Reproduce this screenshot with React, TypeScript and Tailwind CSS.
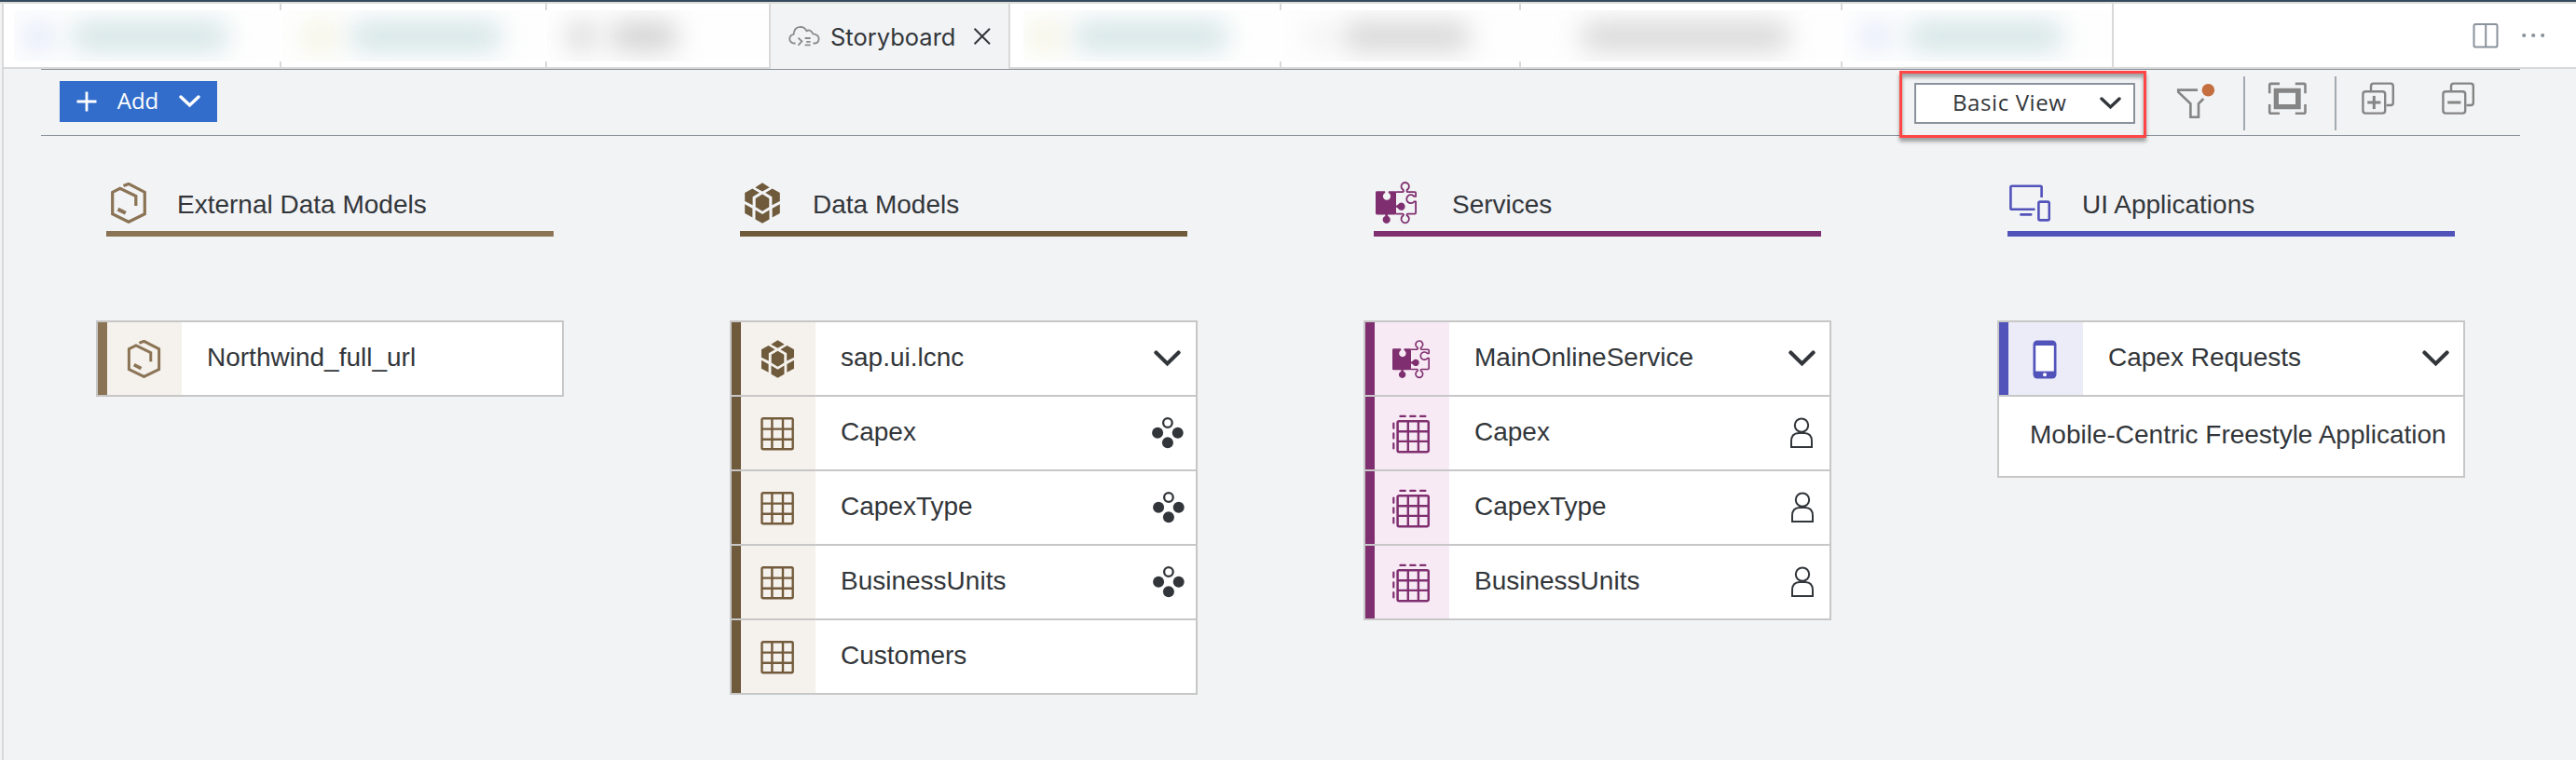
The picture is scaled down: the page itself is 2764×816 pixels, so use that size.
import type { ReactNode } from "react";

type IconProps = { size?: number };

function ExternalIcon({ size = 44 }: IconProps) {
  return (
    <svg width={size} height={size} viewBox="0 0 44 44" fill="none" stroke="#8b7355" strokeWidth="3.2">
      <path d="M16.5 3.6 L22 1.4 L39.3 10.4 V33.8 L22 42.3 L4.7 33.8 V10.4 L12.8 6.4 L29.8 14.6 V25" />
      <path d="M10.5 28.6 L18.8 32.8" strokeWidth="4" />
    </svg>
  );
}

function DataModelIcon({ size = 44 }: IconProps) {
  return (
    <svg width={size} height={size} viewBox="0 0 44 44" fill="#6f5a3c">
      <path d="M22 0.3 L29.7 5.2 L22 9.4 L14.3 5.2 Z" />
      <path d="M11.3 6.4 L18.8 11 L11.6 15.2 V24.2 L3.2 20 V11 Z" />
      <path d="M32.7 6.4 L25.2 11 L32.4 15.2 V24.2 L40.8 20 V11 Z" />
      <path d="M22 12.6 L29.3 17 V26.3 L22 30.8 L14.7 26.3 V17 Z" />
      <path d="M3.2 23.3 L11.4 27.8 V37.4 L3.2 33 Z" />
      <path d="M40.8 23.3 L32.6 27.8 V37.4 L40.8 33 Z" />
      <path d="M14.5 29.6 L22 34 L29.5 29.6 V39.4 L22 43.8 L14.5 39.4 Z" />
    </svg>
  );
}

function PuzzleIcon({ size = 44 }: IconProps) {
  return (
    <svg className="overflow-visible" width={size} height={size} viewBox="0 0 44 44" fill="none">
      <path
        fill="#7f2f6f"
        d="M1.4 9.2 H10 L10.4 11 A4.1 4.1 0 1 0 13.6 11 L14 9.2 H20.6 Q22 9.2 22 10.6 V24.8 L23.9 23.8 A4.1 4.1 0 1 1 23.9 27.6 L22 26.6 V33 Q22 34.4 20.6 34.4 H12.9 L13.2 36 A4.1 4.1 0 1 1 10.2 36 L10.5 34.4 H1.4 Q0 34.4 0 33 V10.6 Q0 9.2 1.4 9.2 Z"
      />
      <path
        stroke="#7f2f6f"
        strokeWidth="1.8"
        strokeLinejoin="round"
        d="M21.6 10.2 H29 Q30.4 9.6 29.7 7.9 A4.2 4.2 0 1 1 33.7 7.9 Q33 9.6 34.4 10.2 H42 Q43.1 10.2 43.1 11.3 V14.9 H41.3 A4.5 4.5 0 1 0 41.3 20.5 H43.1 V32.5 Q43.1 33.6 42 33.6 H34.4 Q33 34 33.7 35.4 A4.2 4.2 0 1 1 29.7 35.4 Q30.4 34 29 33.6 H21.6"
      />
    </svg>
  );
}

function DevicesIcon() {
  return (
    <svg width="46" height="44" viewBox="0 0 46 44" fill="none" stroke="#5253ba" strokeWidth="2.6" strokeLinecap="butt">
      <path d="M36.6 16 V5 Q36.6 3.8 35.2 3.8 H4.8 Q3.4 3.8 3.4 5 V27.4 Q3.4 28.8 4.8 28.8 H29.5" />
      <path d="M14.4 34.4 H25.2" strokeLinecap="round" />
      <rect x="33.4" y="20.6" width="11.4" height="19.8" rx="1.6" />
    </svg>
  );
}

function PhoneIcon() {
  return (
    <svg width="26" height="42" viewBox="0 0 26 42">
      <rect x="0.5" y="0.5" width="25" height="41" rx="4.5" fill="#5253ba" />
      <rect x="3.2" y="6" width="19.6" height="27.6" fill="#fff" />
      <circle cx="13" cy="37.2" r="2" fill="#fff" />
    </svg>
  );
}

function TableIcon() {
  return (
    <svg width="36" height="36" viewBox="0 0 36 36" fill="none" stroke="#735b3c" strokeWidth="2.4">
      <rect x="1.5" y="1.2" width="33.2" height="33" rx="1.4" />
      <path d="M12.4 1 V34 M24 1 V34 M1.5 12.6 H35 M1.5 23.8 H35" />
    </svg>
  );
}

function ProjectionIcon() {
  return (
    <svg width="40" height="42" viewBox="0 0 40 42" fill="none" stroke="#7f2f6f" strokeWidth="2.2">
      <rect x="5.6" y="7.2" width="33.2" height="33" rx="1.6" strokeWidth="2.5" />
      <path d="M16.8 7 V40 M27.9 7 V40 M5.6 18.3 H39 M5.6 28.9 H39" strokeWidth="2.4" />
      <path
        d="M8.4 1.9 H13.8 M19.2 1.9 H24.6 M30 1.9 H35.4 M1.3 9.6 V14.8 M1.3 20.4 V25.6 M1.3 31.2 V36.4"
        strokeLinecap="round"
      />
    </svg>
  );
}

function ChevronDown() {
  return (
    <svg width="29" height="18" viewBox="0 0 29 18" fill="none" stroke="#32363a" strokeWidth="4.2">
      <path d="M2.4 2.6 L14.5 14.4 L26.6 2.6" strokeLinecap="round" />
    </svg>
  );
}

function SmallChevron({ color }: { color: string }) {
  return (
    <svg width="23" height="14" viewBox="0 0 23 14" fill="none" stroke={color} strokeWidth="3.4">
      <path d="M2 2 L11.5 11 L21 2" strokeLinecap="round" />
    </svg>
  );
}

function ClusterIcon() {
  return (
    <svg width="34" height="34" viewBox="0 0 34 34" fill="#32363a">
      <circle cx="6.1" cy="16.7" r="6" />
      <circle cx="27.7" cy="16.7" r="6" />
      <circle cx="16.9" cy="27.3" r="6" />
      <circle cx="16.9" cy="6" r="4.8" fill="none" stroke="#32363a" strokeWidth="2.3" />
    </svg>
  );
}

function PersonIcon() {
  return (
    <svg width="26" height="34" viewBox="0 0 26 34" fill="none" stroke="#32363a" strokeWidth="2">
      <circle cx="13" cy="8.6" r="7.2" />
      <path d="M2 32 V26 Q2 17 10 17 H16 Q24 17 24 26 V32 Z" />
    </svg>
  );
}

function StackIcon({ plus }: { plus?: boolean }) {
  return (
    <svg width="36" height="36" viewBox="0 0 36 36" fill="none" stroke="#858585" strokeWidth="2.4">
      <path d="M10 9 V4.4 Q10 1.6 12.8 1.6 H31 Q33.8 1.6 33.8 4.4 V22.2 Q33.8 25 31 25 H26.5" />
      <rect x="1.4" y="10.2" width="23.8" height="23.4" rx="2.8" />
      <path d="M6.2 22 H20.4" strokeWidth="3" />
      {plus && <path d="M13.3 14.9 V29.1" strokeWidth="3" />}
    </svg>
  );
}

function Blob({ className }: { className: string }) {
  return <div className={`h-[32px] shrink-0 rounded-[12px] opacity-75 blur-[14px] ${className}`} />;
}

function Tab({
  width,
  children,
  solid,
  inset,
}: {
  width: string;
  children: ReactNode;
  solid?: boolean;
  inset?: string;
}) {
  return (
    <div className={`flex h-[70px] shrink-0 border-b-2 border-[#d9d9d9] bg-white ${width}`}>
      <div className={`flex flex-1 py-[7px] ${inset ?? ""}`}>
        <div className="flex h-[55px] w-full items-center overflow-hidden bg-[#fefefe]">{children}</div>
      </div>
      <div className="flex w-[2px] flex-col justify-between">
        <div className={solid ? "h-full bg-[#d9d9d9]" : "h-[7px] bg-[#d9d9d9]"} />
        <div className={solid ? "hidden" : "h-[6px] bg-[#d9d9d9]"} />
      </div>
    </div>
  );
}

function TabStrip() {
  return (
    <div className="flex h-[70px] bg-white">
      <Tab width="w-[298px]" inset="pl-[11px]">
        <Blob className="ml-[8px] w-[36px] bg-[#d9e3f6]" />
        <Blob className="ml-[18px] w-[168px] bg-[#c6dcde]" />
      </Tab>
      <Tab width="w-[285px]">
        <Blob className="ml-[22px] w-[38px] bg-[#f1f0d8]" />
        <Blob className="ml-[14px] w-[162px] bg-[#c6dcde]" />
      </Tab>
      <Tab width="w-[240px]" solid>
        <Blob className="ml-[20px] w-[34px] bg-[#cfcfcf]" />
        <Blob className="ml-[14px] w-[72px] bg-[#c4c4c4]" />
      </Tab>
      <div className="flex h-[70px] w-[257px] shrink-0 items-center border-r-2 border-[#d9d9d9] bg-[#f2f3f5]">
        <svg className="ml-[19px]" width="34" height="24" viewBox="0 0 34 24" fill="none" stroke="#8a8a8a" strokeWidth="1.8">
          <path d="M7.5 19.5 H5.8 Q1.4 18.8 1.2 14.5 Q1.5 10.6 5.6 9.8 Q6.2 2 12.6 1.8 Q17.6 1.8 19.4 6.2 Q23.6 3.8 26.4 9.4 Q32.6 10.2 32.6 14.8 Q32.2 19.2 28.4 19.5 H26.5" />
          <path d="M10.4 13.6 L14.4 17.4 L10.4 21.6 M17.6 14 H23.6 M19.2 17.8 H23.6 M17.6 21.4 H23.6" />
        </svg>
        <span className="ml-[11px] w-[141px] pt-[1px] font-['Inter'] text-[25.5px] leading-[30px] text-[#32363a]">
          Storyboard
        </span>
        <svg className="ml-[12px]" width="20" height="20" viewBox="0 0 20 20" fill="none" stroke="#32363a" strokeWidth="2">
          <path d="M1.6 1.8 L18 18.2 M18 1.8 L1.6 18.2" />
        </svg>
      </div>
      <Tab width="w-[291px]" inset="pl-[14px]">
        <Blob className="ml-[6px] w-[36px] bg-[#f1f0d8]" />
        <Blob className="ml-[12px] w-[166px] bg-[#c6dcde]" />
      </Tab>
      <Tab width="w-[257px]">
        <Blob className="ml-[24px] w-[32px] bg-[#f0f0f0]" />
        <Blob className="ml-[10px] w-[136px] bg-[#cacaca]" />
      </Tab>
      <Tab width="w-[345px]">
        <Blob className="ml-[64px] w-[224px] bg-[#cccccc]" />
      </Tab>
      <Tab width="w-[291px]" solid>
        <Blob className="ml-[18px] w-[34px] bg-[#d9e3f6]" />
        <Blob className="ml-[18px] w-[166px] bg-[#c6dcde]" />
      </Tab>
      <div className="flex h-[70px] flex-1 items-center justify-end border-b-2 border-[#d9d9d9] pr-[34px]">
        <svg width="28" height="28" viewBox="0 0 28 28" fill="none" stroke="#8a929b" strokeWidth="2">
          <rect x="1.5" y="2" width="25" height="24.5" rx="1.8" />
          <path d="M14.2 2 V26.5" />
        </svg>
        <svg className="ml-[25px]" width="24" height="6" viewBox="0 0 24 6" fill="#8a929b">
          <circle cx="2.2" cy="3" r="2.1" />
          <circle cx="12.2" cy="3" r="2.1" />
          <circle cx="22.2" cy="3" r="2.1" />
        </svg>
      </div>
    </div>
  );
}

function Toolbar() {
  return (
    <div className="ml-[40px] flex h-[72px] w-[2660px] border-y border-[#8a919b]">
      <button className="mt-[12px] ml-[20px] flex h-[44px] w-[169px] shrink-0 items-center bg-[#326dcb] text-white">
        <svg className="ml-[18px]" width="22" height="22" viewBox="0 0 22 22" stroke="#fff" strokeWidth="2.8">
          <path d="M11 0.5 V21.5 M0.5 11 H21.5" />
        </svg>
        <span className="ml-[21px] w-[46px] pb-[3px] font-['Open_Sans'] text-[24px] leading-[32px]">Add</span>
        <span className="ml-[21px]">
          <SmallChevron color="#fff" />
        </span>
      </button>
      <div className="mt-px ml-[1805px] h-[72px] w-[265px] shrink-0 border-[3px] border-[#ff4545] pt-[10px] pl-[13px] shadow-[0_4px_4px_rgba(0,0,0,0.35),inset_0_4px_4px_rgba(0,0,0,0.35)]">
        <div className="flex h-[44px] w-[237px] items-center border-2 border-[#89919a] bg-white text-[#32363a]">
          <span className="ml-[39px] w-[129px] pb-[3px] font-['Open_Sans'] text-[24px] leading-[32px] tracking-[0.6px] whitespace-nowrap">
            Basic View
          </span>
          <span className="ml-[29px]">
            <SmallChevron color="#32363a" />
          </span>
        </div>
      </div>
      <svg className="mt-[13px] ml-[31px] shrink-0" width="44" height="42" viewBox="0 0 44 42" fill="none" stroke="#858585" strokeWidth="2.6">
        <path d="M24 8.6 H3.2 V10.6 L16.4 23.4 V37.8 H25 V23.4 L30.3 18" />
        <circle cx="35.4" cy="8.8" r="6.8" fill="#c56e40" stroke="none" />
      </svg>
      <div className="mt-[7px] ml-[29px] h-[58px] w-[2px] shrink-0 bg-[#a3a9b1]" />
      <svg className="mt-[13px] ml-[24px] shrink-0" width="42" height="36" viewBox="0 0 42 36" fill="none" stroke="#858585" strokeWidth="2.6">
        <path d="M2.2 12.2 V3.4 Q2.2 1.9 3.7 1.9 H13 M29.8 1.9 H39 Q40.5 1.9 40.5 3.4 V12.2 M40.5 24 V32.3 Q40.5 33.8 39 33.8 H29.8 M13 33.8 H3.7 Q2.2 33.8 2.2 32.3 V24" />
        <path fill="#858585" stroke="none" fillRule="evenodd" d="M6.7 6.7 H35.7 V29.3 H6.7 Z M12 11.7 V24 H30 V11.7 Z" />
      </svg>
      <div className="mt-[7px] ml-[30px] h-[58px] w-[2px] shrink-0 bg-[#a3a9b1]" />
      <div className="mt-[13px] ml-[27px] shrink-0">
        <StackIcon plus />
      </div>
      <div className="mt-[13px] ml-[50px] shrink-0">
        <StackIcon />
      </div>
    </div>
  );
}

function Heading({
  icon,
  iconBox,
  title,
  line,
}: {
  icon: ReactNode;
  iconBox: string;
  title: string;
  line: string;
}) {
  return (
    <div className={`ml-[11px] flex h-[108px] w-[480px] items-start border-b-[6px] pt-[50px] ${line}`}>
      <div className={`shrink-0 ${iconBox}`}>{icon}</div>
      <h2 className="pt-[2px] text-[28px] leading-[44px] whitespace-nowrap">{title}</h2>
    </div>
  );
}

function Row({
  bar,
  tint,
  icon,
  label,
  action,
  actionPad = "pr-[21px]",
}: {
  bar: string;
  tint: string;
  icon: ReactNode;
  label: string;
  action?: ReactNode;
  actionPad?: string;
}) {
  return (
    <div className="flex h-[80px] items-stretch border-b-2 border-[#c7c7c7]">
      <div className={`w-[10px] shrink-0 ${bar}`} />
      <div className={`flex w-[80px] shrink-0 items-center justify-center pt-px pr-[2px] ${tint}`}>{icon}</div>
      <span className="ml-[27px] flex-1 text-[28px] leading-[75px] whitespace-nowrap">{label}</span>
      <div className={`flex items-center ${actionPad}`}>{action}</div>
    </div>
  );
}

const card = "mt-[90px] w-[502px] border-2 border-b-0 border-[#c7c7c7] bg-white";

export default function App() {
  const brown = { bar: "bg-[#6f5a3c]", tint: "bg-[#f5f1ec]" };
  const plum = { bar: "bg-[#7f2f6f]", tint: "bg-[#f7eaf5]" };
  return (
    <div className="flex h-[816px] w-[2764px] flex-col overflow-hidden bg-[#f2f3f5] font-['Liberation_Sans',sans-serif] text-[#32363a]">
      <div className="h-[4px] shrink-0 border-b-2 border-[#dcdcd8] bg-[#354a5f]" />
      <div className="ml-[2px] flex-1 border-l-2 border-[#d9d9d9]">
        <TabStrip />
        <Toolbar />
        <main className="ml-[99px] flex gap-[178px]">
          <section className="w-[502px]">
            <Heading icon={<ExternalIcon />} iconBox="ml-[2px] w-[74px]" title="External Data Models" line="border-[#8b7355]" />
            <div className={card}>
              <Row bar="bg-[#8b7355]" tint="bg-[#f5f1ec]" icon={<ExternalIcon size={41} />} label="Northwind_full_url" />
            </div>
          </section>
          <section className="w-[502px]">
            <Heading icon={<DataModelIcon />} iconBox="ml-[2px] w-[76px]" title="Data Models" line="border-[#6f5a3c]" />
            <div className={card}>
              <Row {...brown} icon={<DataModelIcon size={41} />} label="sap.ui.lcnc" action={<ChevronDown />} actionPad="pr-[16px]" />
              <Row {...brown} icon={<TableIcon />} label="Capex" action={<ClusterIcon />} actionPad="pr-[13px]" />
              <Row {...brown} icon={<TableIcon />} label="CapexType" action={<ClusterIcon />} actionPad="pr-[12px]" />
              <Row {...brown} icon={<TableIcon />} label="BusinessUnits" action={<ClusterIcon />} actionPad="pr-[12px]" />
              <Row {...brown} icon={<TableIcon />} label="Customers" />
            </div>
          </section>
          <section className="w-[502px]">
            <Heading icon={<PuzzleIcon />} iconBox="ml-[2px] w-[82px]" title="Services" line="border-[#7f2f6f]" />
            <div className={card}>
              <Row {...plum} icon={<PuzzleIcon size={40} />} label="MainOnlineService" action={<ChevronDown />} actionPad="pr-[15px]" />
              <Row {...plum} icon={<ProjectionIcon />} label="Capex" action={<PersonIcon />} actionPad="pr-[17px]" />
              <Row {...plum} icon={<ProjectionIcon />} label="CapexType" action={<PersonIcon />} actionPad="pr-[16px]" />
              <Row {...plum} icon={<ProjectionIcon />} label="BusinessUnits" action={<PersonIcon />} actionPad="pr-[16px]" />
            </div>
          </section>
          <section className="w-[502px]">
            <Heading icon={<DevicesIcon />} iconBox="ml-0 w-[80px]" title="UI Applications" line="border-[#5253ba]" />
            <div className={card}>
              <Row bar="bg-[#5253ba]" tint="bg-[#ebecf7]" icon={<PhoneIcon />} label="Capex Requests" action={<ChevronDown />} actionPad="pr-[15px]" />
              <div className="h-[87px] border-b-2 border-[#c7c7c7] pl-[33px] text-[28px] leading-[81px] whitespace-nowrap">
                Mobile-Centric Freestyle Application
              </div>
            </div>
          </section>
        </main>
      </div>
    </div>
  );
}
